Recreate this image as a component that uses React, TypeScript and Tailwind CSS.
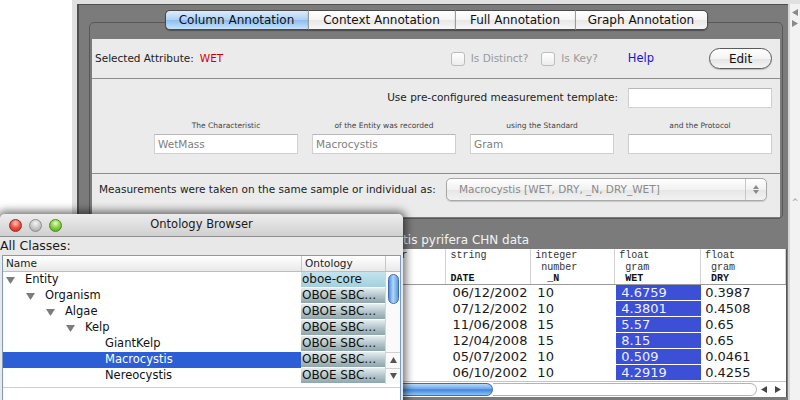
import React from 'react'

const ui = "font-['DejaVu_Sans',sans-serif]"
const mono = "font-['Liberation_Mono',monospace]"

const tabs = [
  { label: 'Column Annotation', cls: 'w-[143px] rounded-l-[5px] border-l', active: true },
  { label: 'Context Annotation', cls: 'w-[147px] border-l-[#9c9c9c] border-l' },
  { label: 'Full Annotation', cls: 'w-[120px] border-l-[#9c9c9c] border-l' },
  { label: 'Graph Annotation', cls: 'w-[133px] rounded-r-[5px] border-r border-l border-l-[#9c9c9c]' },
]

const fields = [
  { label: 'The Characteristic', value: 'WetMass' },
  { label: 'of the Entity was recorded', value: 'Macrocystis' },
  { label: 'using the Standard', value: 'Gram' },
  { label: 'and the Protocol', value: '' },
]

// table columns, the first two sit behind the ontology window
const cols = [
  { w: 'w-[273px]', head: ['', '', ''] },
  { w: 'w-[85px]', head: ['integer', '', ''] },
  { w: 'w-[85px]', head: ['string', '', 'DATE'] },
  { w: 'w-[84px]', head: ['integer', ' number', '  _N'] },
  { w: 'w-[86px]', head: ['float', ' gram', ' WET'] },
  { w: 'w-[85px]', head: ['float', ' gram', ' DRY'] },
]

const rows = [
  ['06/12/2002', '10', '4.6759', '0.3987'],
  ['07/12/2002', '10', '4.3801', '0.4508'],
  ['11/06/2008', '15', '5.57', '0.65'],
  ['12/04/2008', '15', '8.15', '0.65'],
  ['05/07/2002', '10', '0.509', '0.0461'],
  ['06/10/2002', '10', '4.2919', '0.4255'],
]

const classes = [
  { name: 'Entity', level: 0, open: true, onto: 'oboe-core' },
  { name: 'Organism', level: 1, open: true, onto: 'OBOE SBC…' },
  { name: 'Algae', level: 2, open: true, onto: 'OBOE SBC…' },
  { name: 'Kelp', level: 3, open: true, onto: 'OBOE SBC…' },
  { name: 'GiantKelp', level: 4, open: false, onto: 'OBOE SBC…' },
  { name: 'Macrocystis', level: 4, open: false, onto: 'OBOE SBC…', selected: true },
  { name: 'Nereocystis', level: 4, open: false, onto: 'OBOE SBC…' },
]

const indents = ['pl-[3px]', 'pl-[23px]', 'pl-[43px]', 'pl-[63px]', 'pl-[83px]']

const Checkbox = ({ className = '' }: { className?: string }) => (
  <div className={`w-[14px] h-[14px] rounded-[3px] border border-[#bdbdbd] bg-gradient-to-b from-white to-[#ededed] ${className}`} />
)

const Tri = ({ dir, color = '#8a8a8a' }: { dir: 'up' | 'down' | 'left' | 'right'; color?: string }) => {
  const d = {
    up: 'M0 6h7L3.5 0z',
    down: 'M0 0h7L3.5 6z',
    left: 'M6 0v7L0 3.5z',
    right: 'M0 0v7L6 3.5z',
  }[dir]
  return (
    <svg width="7" height="7" viewBox="0 0 7 7">
      <path d={d} fill={color} />
    </svg>
  )
}

const OntologyBrowser = () => (
  <div className={`absolute left-0 top-[214px] w-[403px] h-[192px] rounded-t-[5px] bg-[#e8e8e8] shadow-[0_0_9px_3px_rgba(0,0,0,0.55)] flex flex-col ${ui}`}>
    {/* title bar */}
    <div className="h-[23px] shrink-0 grid grid-cols-[1fr_auto_1fr] items-center rounded-t-[5px] bg-[linear-gradient(#ededed,#d0d0d0)] border-b border-[#8e8e8e]">
      <div className="flex items-center gap-[7px] pl-[9px]">
        <div className="w-[13px] h-[13px] rounded-full border border-[#9a2a22] bg-[radial-gradient(circle_at_50%_30%,#ffd0c8_0%,#f0574a_45%,#b3241b_100%)]" />
        <div className="w-[13px] h-[13px] rounded-full border border-[#8d8d8d] bg-[radial-gradient(circle_at_50%_30%,#f5f5f5_0%,#c8c8c8_50%,#a0a0a0_100%)]" />
        <div className="w-[13px] h-[13px] rounded-full border border-[#4d8a24] bg-[radial-gradient(circle_at_50%_30%,#e4ffc0_0%,#8fd14a_45%,#4f9a1c_100%)]" />
      </div>
      <div className="text-[11.5px] text-[#1a1a1a]">Ontology Browser</div>
      <div />
    </div>
    <div className="h-[18px] shrink-0 flex items-center text-[12.5px] text-[#1a1a1a]">All Classes:</div>
    <div className="mx-[2px] flex-1 border border-[#7b9cbf] bg-white flex flex-col">
      {/* header */}
      <div className="h-[16px] shrink-0 flex border-b border-[#bdbdbd] bg-[linear-gradient(#ffffff,#e9e9e9)] text-[10.5px] text-[#222]">
        <div className="w-[298px] pl-[3px] leading-[15px]">Name</div>
        <div className="w-[84px] pl-[3px] leading-[15px] border-l border-[#c8c8c8]">Ontology</div>
        <div className="flex-1 border-l border-[#c8c8c8]" />
      </div>
      <div className="flex">
        <div className="w-[382px]">
          {classes.map((c) => (
            <div key={c.name} className="h-[16px] flex">
              <div className={`w-[298px] flex items-center ${indents[c.level]} ${c.selected ? 'bg-[#2c5fd5] text-white' : 'text-[#111]'}`}>
                <div className="w-[9px] flex justify-center">
                  {c.open && (
                    <svg width="9" height="7" viewBox="0 0 9 7">
                      <path d="M0 0h9L4.5 7z" fill="#7c7c7c" />
                    </svg>
                  )}
                </div>
                <span className="ml-[10px] text-[11.5px]">{c.name}</span>
              </div>
              <div className={`w-[84px] h-[15px] pl-[1px] text-[12px] leading-[15px] text-[#111] overflow-hidden whitespace-nowrap ${c.onto === 'oboe-core' ? 'bg-[linear-gradient(#c4e4ee,#a2cfdf)]' : 'bg-[linear-gradient(#e6edef,#b0c2c7_55%,#8fa6ad)]'}`}>
                {c.onto}
              </div>
            </div>
          ))}
        </div>
        {/* vertical scroller */}
        <div className="w-[15px] h-[112px] border-l border-[#d4d4d4] bg-[#fafafa] flex flex-col items-center">
          <div className="mt-[2px] w-[11px] h-[30px] rounded-full border border-[#3b6fb4] bg-[linear-gradient(90deg,#4e8fe0,#b3d6f8_45%,#5b9ae6)]" />
          <div className="flex-1" />
          <div className="w-full h-[16px] border-t border-[#d0d0d0] flex items-center justify-center">
            <Tri dir="up" color="#555" />
          </div>
          <div className="w-full h-[16px] border-t border-[#d0d0d0] flex items-center justify-center">
            <Tri dir="down" color="#555" />
          </div>
        </div>
      </div>
      <div className="mt-[3px] border-t border-[#cfcfcf] flex-1" />
    </div>
  </div>
)

export default function App() {
  return (
    <div className={`w-[800px] h-[400px] relative overflow-hidden bg-white flex ${ui}`}>
      <div className="w-[72px] shrink-0 bg-white" />
      <div className="flex-1 flex flex-col bg-[#e0e0e0] pt-[4px]">
        <div className="flex-1 flex">
          <div className="w-[5px] shrink-0" />
          <div className="w-[711px] shrink-0 border-l-2 border-t border-[#4f4f4f] bg-[#7b7b7b] flex flex-col">
            {/* tabbed pane */}
            <div className="pl-[10px] pr-[5px] pt-[5px]">
              <div className="flex justify-center relative z-10 -mb-[8px]">
                {tabs.map((t) => (
                  <div
                    key={t.label}
                    className={`${t.cls} h-[20px] flex items-center justify-center text-[12px] text-[#111] border-y border-[#4a4a4a] shadow-[0_1px_1px_rgba(0,0,0,0.35)] ${
                      t.active
                        ? 'bg-[linear-gradient(#dcecfc,#acd1f4_50%,#8cbdf0_52%,#c8e3fb)]'
                        : 'bg-[linear-gradient(#ffffff,#f5f5f5_50%,#e8e8e8_52%,#f6f6f6)]'
                    }`}
                  >
                    {t.label}
                  </div>
                ))}
              </div>
              <div className="border border-[#575757] rounded-[5px] pt-[16px] px-[2px] pb-[1px]">
                <div className="bg-[#ebebeb] flex flex-col text-[10.5px] text-[#222]">
                  {/* attribute row */}
                  <div className="h-[40px] flex items-center border-b border-[#8d8d8d] pl-[3px] pr-[8px]">
                    <span>Selected Attribute:</span>
                    <span className="ml-[6px] text-[#d10000]">WET</span>
                    <div className="ml-auto flex items-center">
                      <Checkbox />
                      <span className="ml-[6px] text-[#9a9a9a]">Is Distinct?</span>
                      <Checkbox className="ml-[13px]" />
                      <span className="ml-[6px] text-[#9a9a9a]">Is Key?</span>
                      <span className="ml-[30px] text-[11.5px] text-[#1515dc]">Help</span>
                      <button className="ml-[55px] w-[63px] h-[21px] rounded-full border border-[#5a5a5a] bg-[linear-gradient(#ffffff,#f3f3f3_50%,#e4e4e4_52%,#f5f5f5)] text-[12px] text-[#111] shadow-[0_1px_1px_rgba(0,0,0,0.2)]">
                        Edit
                      </button>
                    </div>
                  </div>
                  {/* template / characteristic row */}
                  <div className="h-[95px] border-b border-[#8d8d8d] flex flex-col items-end pr-[8px] pt-[9px]">
                    <div className="h-[20px] flex items-center">
                      <span>Use pre-configured measurement template:</span>
                      <div className="ml-[10px] w-[144px] h-[20px] bg-white border border-[#d0d0d0] border-t-[#b8b8b8]" />
                    </div>
                    <div className="mt-[12px] w-[618px] grid grid-cols-4 gap-x-[14px] gap-y-[2px]">
                      {fields.map((f) => (
                        <div key={f.label} className="h-[12px] leading-[12px] text-center text-[7.5px] text-[#444]">
                          {f.label}
                        </div>
                      ))}
                      {fields.map((f) => (
                        <div key={f.label + 'v'} className="h-[20px] bg-white border border-[#d0d0d0] border-t-[#b8b8b8] pl-[3px] leading-[18px] text-[#808080]">
                          {f.value}
                        </div>
                      ))}
                    </div>
                  </div>
                  {/* sample row */}
                  <div className="h-[43px] flex items-start pt-[4px] pl-[7px] pr-[13px]">
                    <div className="h-[23px] flex items-center">Measurements were taken on the same sample or individual as:</div>
                    <div className="ml-auto w-[321px] h-[23px] rounded-[5px] border border-[#a8a8a8] bg-[linear-gradient(#ffffff,#f1f1f1_50%,#e6e6e6_52%,#f2f2f2)] flex items-center shadow-[0_1px_1px_rgba(0,0,0,0.15)]">
                      <span className="flex-1 pl-[12px] text-[#8a8a8a]">Macrocystis [WET, DRY, _N, DRY_WET]</span>
                      <div className="w-[21px] h-full border-l border-[#c8c8c8] flex flex-col items-center justify-center gap-[1px]">
                        <svg width="6" height="4" viewBox="0 0 6 4"><path d="M0 4h6L3 0z" fill="#8a8a8a" /></svg>
                        <svg width="6" height="4" viewBox="0 0 6 4"><path d="M0 0h6L3 4z" fill="#8a8a8a" /></svg>
                      </div>
                    </div>
                  </div>
                </div>
              </div>
            </div>
            {/* data table */}
            <div className="pl-[10px] pr-[1px] mt-[12px] flex-1 flex flex-col">
              <div className="h-[18px] flex items-center justify-center text-[12px] text-[#f3f3f3]">Macrocystis pyrifera CHN data</div>
              <div className="w-[698px] bg-white border-r border-[#555] flex flex-col">
                <div className={`h-[36px] flex border-b border-[#9a9a9a] ${mono} text-[10px] leading-[11.5px] text-[#333]`}>
                  {cols.map((c, i) => (
                    <div key={i} className={`${c.w} border-r border-[#d2d2d2] pl-[4px] pt-[1px] whitespace-pre`}>
                      <div className="h-[11.5px]">{c.head[0]}</div>
                      <div className="h-[11.5px]">{c.head[1]}</div>
                      <div className="h-[11.5px] font-bold text-[#111]">{c.head[2]}</div>
                    </div>
                  ))}
                </div>
                {rows.map((r, ri) => (
                  <div key={ri} className="h-[16px] flex text-[13px] leading-[15px] text-[#1a1a1a]">
                    <div className="w-[358px]" />
                    <div className="w-[85px] pl-[6px]">{r[0]}</div>
                    <div className="w-[84px] pl-[6px]">{r[1]}</div>
                    <div className="w-[86px] pl-[1px]">
                      <div className="h-[15px] bg-[#3b4fd7] pl-[5px] text-[#eef0ff]">{r[2]}</div>
                    </div>
                    <div className="w-[85px] pl-[4px]">{r[3]}</div>
                  </div>
                ))}
                {/* horizontal scroller */}
                <div className="h-[16px] border-t border-[#c4c4c4] flex items-center">
                  <div className="w-[404px] h-[13px] rounded-r-full border border-l-0 border-[#3b6fb4] bg-[linear-gradient(#bcdaf8,#6aa6ea_45%,#3f86e0_52%,#8fc2f4)]" />
                  <div className="flex-1 h-[13px] rounded-r-full border border-l-0 border-[#b4b4b4] bg-white" />
                  <div className="w-[29px] flex items-center justify-around">
                    <Tri dir="left" color="#444" />
                    <Tri dir="right" color="#444" />
                  </div>
                </div>
              </div>
            </div>
          </div>
          {/* right divider strip */}
          <div className="w-[12px] shrink-0 bg-[#f2f2f2] border-l-2 border-[#d6d6d6] flex flex-col items-center pt-[5px]">
            <Tri dir="left" color="#8a8a8a" />
            <div className="mt-[4px]">
              <Tri dir="right" color="#8a8a8a" />
            </div>
            <div className="mt-[172px] text-[8px] leading-[8px] text-[#999]">^</div>
          </div>
        </div>
      </div>
      <OntologyBrowser />
    </div>
  )
}
